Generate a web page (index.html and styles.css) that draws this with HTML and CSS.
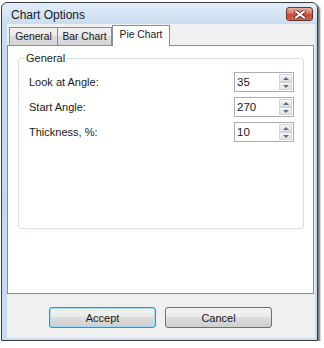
FILE: index.html
```html
<!DOCTYPE html>
<html lang="en">
<head>
    <meta charset="UTF-8">
    <title>Chart Options</title>
    <link rel="stylesheet" href="styles.css">
</head>
<body>
    <div class="window">
        <div class="titlebar">
            <span class="title">Chart Options</span>
            <div class="close">
                <svg width="12" height="9" viewBox="0 0 12 9">
                    <path d="M2 1.5 L10 7.5 M10 1.5 L2 7.5" stroke="#5a2a24" stroke-width="3.6" stroke-linecap="square"/>
                    <path d="M2 1.5 L10 7.5 M10 1.5 L2 7.5" stroke="#ffffff" stroke-width="2" stroke-linecap="square"/>
                </svg>
            </div>
        </div>
        <div class="client">
            <div class="tabs">
                <div class="tab t-general">General</div>
                <div class="tab t-bar">Bar Chart</div>
                <div class="tab t-pie active">Pie Chart</div>
            </div>
            <div class="panel">
                <fieldset class="group">
                    <legend>General</legend>
                    <div class="row">
                        <span>Look at Angle:</span>
                        <div class="spin"><span class="val">35</span><div class="arrows"><div class="up"></div><div class="down"></div></div></div>
                    </div>
                    <div class="row">
                        <span>Start Angle:</span>
                        <div class="spin"><span class="val">270</span><div class="arrows"><div class="up"></div><div class="down"></div></div></div>
                    </div>
                    <div class="row">
                        <span>Thickness, %:</span>
                        <div class="spin"><span class="val">10</span><div class="arrows"><div class="up"></div><div class="down"></div></div></div>
                    </div>
                </fieldset>
            </div>
            <div class="buttons">
                <button class="btn default">Accept</button>
                <button class="btn">Cancel</button>
            </div>
        </div>
    </div>
</body>
</html>
```

FILE: styles.css
```css
body {margin:0; background:#fff; font-family:"Liberation Sans", Arial, sans-serif; font-size:11px; color:#1a1a1a;}

.window {margin:2px 0 0 1px; width:317px; height:339px; box-sizing:border-box; border:1px solid #3a3d42; border-radius:6px 6px 0 0;
    background:linear-gradient(#e2edf9, #c9dcf0 22px, #c3d8ee 60%, #c8ddf1);
    box-shadow:2px 2px 2px rgba(0,0,0,0.55); padding:0 2px 2px 5px; display:flex; flex-direction:column;}

.titlebar {height:21px; display:flex; justify-content:space-between; align-items:flex-start;}
.title {font-size:12px; color:#1a1a1a; padding:6px 0 0 4px; line-height:13px;}
.close {margin:4px 2px 0 0; width:27px; height:14px; box-sizing:border-box; border:1px solid #70332b; border-radius:3px;
    background:linear-gradient(#eab0a4, #d8725f 45%, #c54a33 55%, #d0664e); display:flex; align-items:center; justify-content:center;}
.close svg {display:block;}

.client {flex:1; background:#f0f0f0; display:flex; flex-direction:column;}

.tabs {height:21px; display:flex; align-items:flex-end; padding-left:2px;}
.tab {height:18px; box-sizing:border-box; border:1px solid #898c95; border-bottom:none; margin-right:-1px; text-align:center; font-size:10.3px;
    line-height:17px; background:linear-gradient(#f3f3f3, #e9e9e9 50%, #dcdcdc 50%, #d6d6d6); white-space:nowrap;}
.t-general {width:49px;}
.t-bar {width:55px;}
.t-pie {width:58px;}
.tab.active {height:21px; background:#fff; margin:0 0 -1px 1px; line-height:18px; position:relative; z-index:1;}

.panel {height:249px; width:307px; box-sizing:border-box; border:1px solid #898c95; background:#fff;}

.group {margin:6px 9px 0 10px; padding:7px 9px 0 10px; height:177px; box-sizing:border-box; border:1px solid #d5dfe5; border-radius:3px;
    display:flex; flex-direction:column; gap:5px; min-width:0;}
.group legend {margin-left:-5px; padding:0 2px; line-height:13px;}

.row {display:flex; justify-content:space-between; align-items:center; height:20px;}
.spin {width:60px; height:20px; box-sizing:border-box; border:1px solid #abadb3; display:flex; justify-content:space-between; padding:1px;}
.val {padding-left:1px; line-height:17px; font-size:11.5px;}
.arrows {width:13px; display:flex; flex-direction:column;}
.arrows div {flex:1; box-sizing:border-box; border:1px solid #d4d4d4; background:linear-gradient(#f6f6f6, #e2e2e2); display:flex; align-items:center; justify-content:center;}
.up::after {content:""; border-left:3px solid transparent; border-right:3px solid transparent; border-bottom:3px solid #5a6f96;}
.down::after {content:""; border-left:3px solid transparent; border-right:3px solid transparent; border-top:3px solid #5a6f96;}

.buttons {flex:1; display:flex; justify-content:center; gap:9px; padding-top:13px; padding-right:1px;}
.btn {width:107px; height:21px; box-sizing:border-box; border:1px solid #707070; border-radius:3px; font-family:inherit; font-size:11px; color:#1a1a1a;
    background:linear-gradient(#f2f2f2, #ebebeb 50%, #dddddd 50%, #cfcfcf); padding:0;}
.btn.default {border-color:#3c8fc7; box-shadow:inset 0 0 0 1px #a5dcf5;}
```
